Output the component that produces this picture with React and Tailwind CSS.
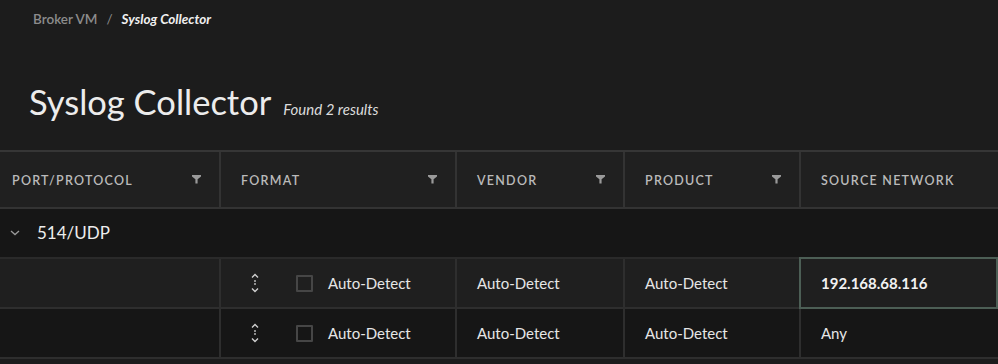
import React from "react";

function Funnel() {
  return (
    <svg width="9" height="9" viewBox="0 0 9 9" className="shrink-0">
      <path d="M0 0H9V1.6L5.6 4.2V8.5H3.4V4.2L0 1.6Z" fill="#9a9a9a" />
    </svg>
  );
}

function Chevron() {
  return (
    <svg width="10" height="6" viewBox="0 0 10 6">
      <path d="M1 1L5 4.6L9 1" stroke="#9a9a9a" strokeWidth="1.3" fill="none" />
    </svg>
  );
}

function DragHandle() {
  return (
    <svg width="10" height="22" viewBox="0 0 10 22">
      <path d="M2 5.5L5 2.5L8 5.5" stroke="#cfcfcf" strokeWidth="1.4" fill="none" />
      <rect x="4.2" y="8.2" width="1.6" height="1.6" fill="#cfcfcf" />
      <rect x="4.2" y="11.2" width="1.6" height="1.6" fill="#cfcfcf" />
      <path d="M2 16.5L5 19.5L8 16.5" stroke="#cfcfcf" strokeWidth="1.4" fill="none" />
    </svg>
  );
}

const cols = "grid grid-cols-[219px_236px_168px_176px_1fr]";

function HeaderCell({ label, filter, first }) {
  return (
    <div
      className={`flex items-center justify-between h-full pt-[4px] pr-[18px] ${first ? "pl-[12px]" : "pl-[20px] border-l-2 border-[#333333]"}`}
    >
      <span className="text-[12.5px] font-semibold tracking-[0.1em] text-[#bababa]">{label}</span>
      {filter && (
        <span className="-mt-[5px]">
          <Funnel />
        </span>
      )}
    </div>
  );
}

function Row({ bg, source, focused }) {
  return (
    <div className={`${cols} h-[50px] ${bg} border-b-2 border-[#2e2e2e]`}>
      <div />
      <div className="flex items-center border-l-2 border-[#2e2e2e] pl-[29px]">
        <DragHandle />
        <div className="ml-[36px] w-[17px] h-[17px] border-2 border-[#464646] rounded-[1px]" />
        <span className="ml-[15px] text-[15px] text-[#e6e6e6]">Auto-Detect</span>
      </div>
      <div className="flex items-center border-l-2 border-[#2e2e2e] pl-[20px] text-[15px] text-[#e6e6e6]">
        Auto-Detect
      </div>
      <div className="flex items-center border-l-2 border-[#2e2e2e] pl-[20px] text-[15px] text-[#e6e6e6]">
        Auto-Detect
      </div>
      <div
        className={`flex items-center pl-[20px] text-[15px] ${focused ? "border-2 border-[#4c5e55] font-bold text-[#f2f2f2] -mt-[2px] -mb-[2px] h-[52px] pl-[19px]" : "border-l-2 border-[#2e2e2e] text-[#e6e6e6]"}`}
      >
        {source}
      </div>
    </div>
  );
}

export default function App() {
  return (
    <div
      className="w-[998px] h-[364px] bg-[#1c1c1c] overflow-hidden text-[#e6e6e6]"
      style={{ fontFamily: "Lato, 'Noto Sans', sans-serif" }}
    >
      <div className="pl-[33px] pt-[15px] h-[24px] flex items-center text-[13.5px] leading-none">
        <span className="font-semibold text-[#8c8c8c]">Broker VM</span>
        <span className="mx-[9px] text-[#8c8c8c]">/</span>
        <span className="font-bold italic text-[#f0f0f0]">Syslog Collector</span>
      </div>
      <div className="pl-[29px] pt-[61px] h-[126px] flex items-baseline">
        <span className="text-[34.5px] leading-none text-[#ececec]">Syslog Collector</span>
        <span className="ml-[12px] text-[15px] italic text-[#dcdcdc]">Found 2 results</span>
      </div>
      <div className="border-t-2 border-[#363636]">
        <div className={`${cols} h-[57px] bg-[#202020] border-b-2 border-[#333333]`}>
          <HeaderCell label="PORT/PROTOCOL" filter first />
          <HeaderCell label="FORMAT" filter />
          <HeaderCell label="VENDOR" filter />
          <HeaderCell label="PRODUCT" filter />
          <HeaderCell label="SOURCE NETWORK" />
        </div>
        <div className="h-[50px] bg-[#161616] flex items-center pl-[10px] border-b-2 border-[#2a2a2a]">
          <Chevron />
          <span className="ml-[17px] text-[17px] text-[#ededed]">514/UDP</span>
        </div>
        <Row bg="bg-[#1f1f1f]" source="192.168.68.116" focused />
        <Row bg="bg-[#161616]" source="Any" />
      </div>
    </div>
  );
}
